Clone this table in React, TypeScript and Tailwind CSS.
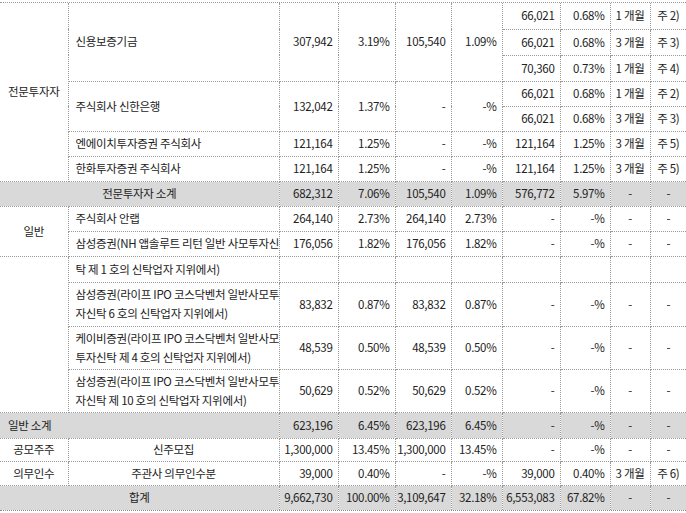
import React from 'react';

const widths = [68, 211, 59, 57, 56, 51, 58, 50, 40, 36];

const num = 'text-right pr-[5px]';
const ctr = 'text-center';
const name = 'text-left pl-[7px]';

// trailing cells shared by most 일반 rows: lock-up columns are empty
function NoLockup() {
  return (
    <>
      <td className={num}>-</td>
      <td className={num}>-%</td>
      <td className={ctr}>-</td>
      <td className={ctr}>-</td>
    </>
  );
}

function Lockup({ qty, pct, term, note }: { qty: string; pct: string; term: string; note: string }) {
  return (
    <>
      <td className={num}>{qty}</td>
      <td className={num}>{pct}</td>
      <td className={ctr}>{term}</td>
      <td className={ctr}>{note}</td>
    </>
  );
}

export default function App() {
  return (
    <div className="w-[686px] h-[513px] bg-white pt-[2px] font-['Noto_Sans_CJK_KR','Noto_Sans',sans-serif] text-[11.5px] tracking-[-0.3px] text-[#222]">
      <div className="border-t border-dotted border-[#9a9a9a] border-b border-b-solid border-b-[#8a8a8a]">
        <table className="w-[686px] table-fixed border-collapse border-hidden [&_td]:border [&_td]:border-dotted [&_td]:border-[#9a9a9a] [&_td]:py-0 [&_td]:whitespace-nowrap [&_td]:overflow-hidden [&_td]:leading-[19px]">
          <colgroup>
            {widths.map((w, i) => (
              <col key={i} style={{ width: w }} />
            ))}
          </colgroup>
          <tbody>
            <tr className="h-[26px]">
              <td rowSpan={7} className={ctr}>전문투자자</td>
              <td rowSpan={3} className={name}>신용보증기금</td>
              <td rowSpan={3} className={num}>307,942</td>
              <td rowSpan={3} className={num}>3.19%</td>
              <td rowSpan={3} className={num}>105,540</td>
              <td rowSpan={3} className={num}>1.09%</td>
              <Lockup qty="66,021" pct="0.68%" term="1 개월" note="주 2)" />
            </tr>
            <tr className="h-[26px]">
              <Lockup qty="66,021" pct="0.68%" term="3 개월" note="주 3)" />
            </tr>
            <tr className="h-[26px]">
              <Lockup qty="70,360" pct="0.73%" term="1 개월" note="주 4)" />
            </tr>
            <tr className="h-[25px]">
              <td rowSpan={2} className={name}>주식회사 신한은행</td>
              <td rowSpan={2} className={num}>132,042</td>
              <td rowSpan={2} className={num}>1.37%</td>
              <td rowSpan={2} className={num}>-</td>
              <td rowSpan={2} className={num}>-%</td>
              <Lockup qty="66,021" pct="0.68%" term="1 개월" note="주 2)" />
            </tr>
            <tr className="h-[25px]">
              <Lockup qty="66,021" pct="0.68%" term="3 개월" note="주 3)" />
            </tr>
            <tr className="h-[25px]">
              <td className={name}>엔에이치투자증권 주식회사</td>
              <td className={num}>121,164</td>
              <td className={num}>1.25%</td>
              <td className={num}>-</td>
              <td className={num}>-%</td>
              <Lockup qty="121,164" pct="1.25%" term="3 개월" note="주 5)" />
            </tr>
            <tr className="h-[25px]">
              <td className={name}>한화투자증권 주식회사</td>
              <td className={num}>121,164</td>
              <td className={num}>1.25%</td>
              <td className={num}>-</td>
              <td className={num}>-%</td>
              <Lockup qty="121,164" pct="1.25%" term="3 개월" note="주 5)" />
            </tr>
            <tr className="h-[25px] bg-[#d9d9d9]">
              <td colSpan={2} className={ctr}>전문투자자 소계</td>
              <td className={num}>682,312</td>
              <td className={num}>7.06%</td>
              <td className={num}>105,540</td>
              <td className={num}>1.09%</td>
              <td className={num}>576,772</td>
              <td className={num}>5.97%</td>
              <td className={ctr}>-</td>
              <td className={ctr}>-</td>
            </tr>
            <tr className="h-[25px]">
              <td rowSpan={2} className={ctr}>일반</td>
              <td className={name}>주식회사 안랩</td>
              <td className={num}>264,140</td>
              <td className={num}>2.73%</td>
              <td className={num}>264,140</td>
              <td className={num}>2.73%</td>
              <NoLockup />
            </tr>
            <tr className="h-[25px]">
              <td className={name}>삼성증권(NH 앱솔루트 리턴 일반 사모투자신</td>
              <td className={num}>176,056</td>
              <td className={num}>1.82%</td>
              <td className={num}>176,056</td>
              <td className={num}>1.82%</td>
              <NoLockup />
            </tr>
            <tr className="h-[26px]">
              <td rowSpan={4}></td>
              <td className={name}>탁 제 1 호의 신탁업자 지위에서)</td>
              <td></td>
              <td></td>
              <td></td>
              <td></td>
              <td></td>
              <td></td>
              <td></td>
              <td></td>
            </tr>
            <tr className="h-[44px]">
              <td className={name}>
                삼성증권(라이프 IPO 코스닥벤처 일반사모투
                <br />
                자신탁 6 호의 신탁업자 지위에서)
              </td>
              <td className={num}>83,832</td>
              <td className={num}>0.87%</td>
              <td className={num}>83,832</td>
              <td className={num}>0.87%</td>
              <NoLockup />
            </tr>
            <tr className="h-[43px]">
              <td className={name}>
                케이비증권(라이프 IPO 코스닥벤처 일반사모
                <br />
                투자신탁 제 4 호의 신탁업자 지위에서)
              </td>
              <td className={num}>48,539</td>
              <td className={num}>0.50%</td>
              <td className={num}>48,539</td>
              <td className={num}>0.50%</td>
              <NoLockup />
            </tr>
            <tr className="h-[43px]">
              <td className={name}>
                삼성증권(라이프 IPO 코스닥벤처 일반사모투
                <br />
                자신탁 제 10 호의 신탁업자 지위에서)
              </td>
              <td className={num}>50,629</td>
              <td className={num}>0.52%</td>
              <td className={num}>50,629</td>
              <td className={num}>0.52%</td>
              <NoLockup />
            </tr>
            <tr className="h-[26px] bg-[#d9d9d9]">
              <td colSpan={2} className="text-left pl-[8px]">일반 소계</td>
              <td className={num}>623,196</td>
              <td className={num}>6.45%</td>
              <td className={num}>623,196</td>
              <td className={num}>6.45%</td>
              <NoLockup />
            </tr>
            <tr className="h-[23px]">
              <td className={ctr}>공모주주</td>
              <td className={ctr}>신주모집</td>
              <td className={num}>1,300,000</td>
              <td className={num}>13.45%</td>
              <td className={num}>1,300,000</td>
              <td className={num}>13.45%</td>
              <NoLockup />
            </tr>
            <tr className="h-[24px]">
              <td className={ctr}>의무인수</td>
              <td className={ctr}>주관사 의무인수분</td>
              <td className={num}>39,000</td>
              <td className={num}>0.40%</td>
              <td className={num}>-</td>
              <td className={num}>-%</td>
              <Lockup qty="39,000" pct="0.40%" term="3 개월" note="주 6)" />
            </tr>
            <tr className="h-[25px] bg-[#d9d9d9]">
              <td colSpan={2} className={ctr}>합계</td>
              <td className={num}>9,662,730</td>
              <td className={num}>100.00%</td>
              <td className={num}>3,109,647</td>
              <td className={num}>32.18%</td>
              <td className={num}>6,553,083</td>
              <td className={num}>67.82%</td>
              <td className={ctr}>-</td>
              <td className={ctr}>-</td>
            </tr>
          </tbody>
        </table>
      </div>
    </div>
  );
}
